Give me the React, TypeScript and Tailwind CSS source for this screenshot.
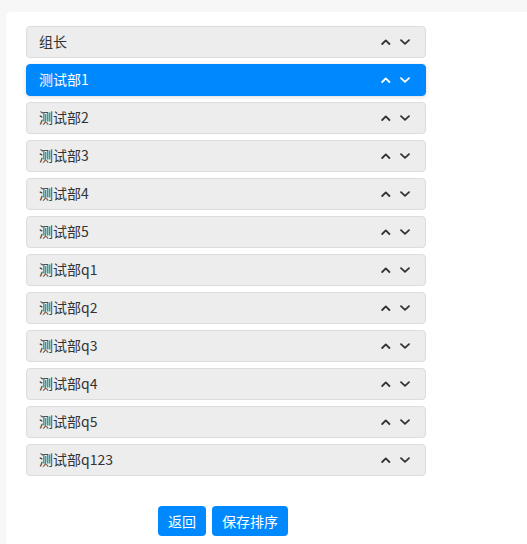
import {useState} from 'react';

const initial = [
  '组长',
  '测试部1',
  '测试部2',
  '测试部3',
  '测试部4',
  '测试部5',
  '测试部q1',
  '测试部q2',
  '测试部q3',
  '测试部q4',
  '测试部q5',
  '测试部q123',
];

function Chevron({up}: {up?: boolean}) {
  return (
    <svg width="10" height="6" viewBox="0 0 10 6" aria-hidden="true">
      <path
        d={up ? 'M1.2 5L4.8 1.4L8.4 5' : 'M1 1.2L5 4.8L9 1.2'}
        fill="none"
        stroke="currentColor"
        strokeWidth="1.8"
        strokeLinecap="round"
        strokeLinejoin="round"
      />
    </svg>
  );
}

export default function App() {
  const [items, setItems] = useState(initial);
  const [active, setActive] = useState(1);

  function move(i: number, dir: number) {
    const j = i + dir;
    if (j < 0 || j >= items.length) return;
    const next = [...items];
    [next[i], next[j]] = [next[j], next[i]];
    setItems(next);
    if (active === i) setActive(j);
    else if (active === j) setActive(i);
  }

  return (
    <div
      className="min-h-[544px] bg-[#f7f7f7] pt-3 pl-1.5"
      style={{fontFamily: '"Microsoft YaHei", "Noto Sans CJK SC", sans-serif'}}
    >
      <div className="min-h-[532px] rounded-tl-[5px] bg-white pt-3.5 pl-5">
        <ul className="flex w-[400px] flex-col gap-1.5">
          {items.map((name, i) => {
            const on = i === active;
            return (
              <li
                key={name}
                onClick={() => setActive(i)}
                className={
                  on
                    ? 'flex h-8 cursor-pointer items-center justify-between rounded-[4px] border border-[#0089ff] bg-[#0089ff] pl-3 pr-[15px] pb-px text-[14px] text-white shadow-[0_1px_4px_rgba(0,0,0,0.15)]'
                    : 'flex h-8 cursor-pointer items-center justify-between rounded-[4px] border border-[#dcdcdc] bg-[#ededed] pl-3 pr-[15px] pb-px text-[14px] text-[#333]'
                }
              >
                <span>{name}</span>
                <span className="flex items-center gap-[9px]">
                  <button type="button" onClick={() => move(i, -1)} className="flex">
                    <Chevron up />
                  </button>
                  <button type="button" onClick={() => move(i, 1)} className="flex">
                    <Chevron />
                  </button>
                </span>
              </li>
            );
          })}
        </ul>
        <div className="mt-[30px] flex gap-1.5 pl-[132px]">
          <button
            type="button"
            className="h-[30px] rounded-[4px] bg-[#0089ff] px-[10px] text-[14px] text-white"
          >
            返回
          </button>
          <button
            type="button"
            className="h-[30px] rounded-[4px] bg-[#0089ff] px-[10px] text-[14px] text-white"
          >
            保存排序
          </button>
        </div>
      </div>
    </div>
  );
}
